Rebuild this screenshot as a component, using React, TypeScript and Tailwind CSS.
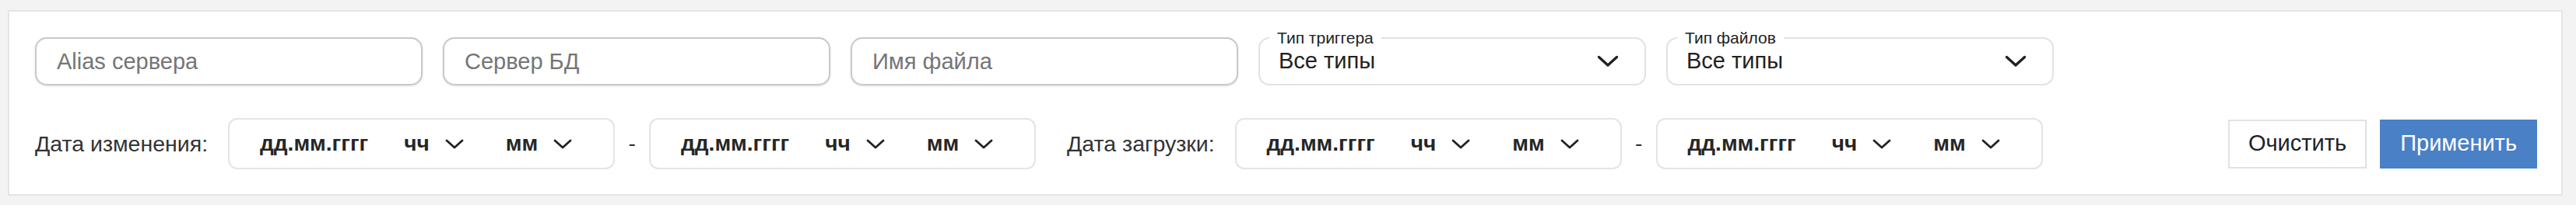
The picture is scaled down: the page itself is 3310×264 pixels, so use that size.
import React from "react";

function Chevron({ big = false }: { big?: boolean }) {
  if (big) {
    return (
      <svg width="28" height="16" viewBox="0 0 28 16" className="shrink-0 text-[#222]">
        <path d="M2.5 2.5 14 13 25.5 2.5" fill="none" stroke="currentColor" strokeWidth="3.4" strokeLinecap="round" strokeLinejoin="round" />
      </svg>
    );
  }
  return (
    <svg width="24" height="13" viewBox="0 0 24 13" className="shrink-0 text-[#222]">
      <path d="M2 2 12 11 22 2" fill="none" stroke="currentColor" strokeWidth="2.8" strokeLinecap="round" strokeLinejoin="round" />
    </svg>
  );
}

function TextInput({ placeholder }: { placeholder: string }) {
  return (
    <input
      type="text"
      placeholder={placeholder}
      className="w-[498px] h-[62px] shrink-0 rounded-[15px] border-2 border-[#c8c8c8] bg-white pl-[26px] pr-4 text-[29px] text-[#222] placeholder:text-[#757575] shadow-[0_1px_3px_rgba(0,0,0,0.12)] outline-none"
    />
  );
}

function TypeSelect({ label }: { label: string }) {
  return (
    <div className="relative w-[498px] h-[62px] shrink-0 rounded-[14px] border-2 border-[#e2e2e2] bg-white flex items-center pl-[24px] pr-[33px]">
      <span className="absolute -top-[12px] left-[12px] px-[10px] bg-white text-[21px] leading-[22px] text-[#222]">
        {label}
      </span>
      <span className="flex-1 text-[29px] text-[#222]">Все типы</span>
      <Chevron big />
    </div>
  );
}

function DateBox() {
  return (
    <div className="w-[497px] h-[66px] shrink-0 rounded-[12px] border-2 border-[#e4e4e4] bg-white flex items-center pl-[39px] text-[28px] font-bold text-[#262626]">
      <span>дд.мм.гггг</span>
      <span className="ml-[46px]">чч</span>
      <span className="ml-[20px]">
        <Chevron />
      </span>
      <span className="ml-[54px]">мм</span>
      <span className="ml-[20px]">
        <Chevron />
      </span>
    </div>
  );
}

function DateRange({ label, className = "" }: { label: string; className?: string }) {
  return (
    <div className={`flex items-center ${className}`}>
      <span className="mr-[26px] text-[28.5px] text-[#333] whitespace-nowrap">{label}</span>
      <DateBox />
      <span className="w-[44px] text-center text-[28px] text-[#333]">-</span>
      <DateBox />
    </div>
  );
}

export default function App() {
  return (
    <div className="w-[3310px] h-[264px] bg-[#f3f3f3] pt-[13px] pl-[10px] pr-[17px] font-['Liberation_Sans',Arial,sans-serif]">
      <div className="border-2 border-[#e5e5e5] bg-white pt-[33px] pb-[32px] pl-[33px] pr-[31px]">
        <div className="flex items-center gap-[26px]">
          <TextInput placeholder="Alias сервера" />
          <TextInput placeholder="Сервер БД" />
          <TextInput placeholder="Имя файла" />
          <TypeSelect label="Тип триггера" />
          <TypeSelect label="Тип файлов" />
        </div>

        <div className="mt-[42px] flex items-center">
          <DateRange label="Дата изменения:" />
          <DateRange label="Дата загрузки:" className="ml-[40px]" />
          <div className="ml-auto flex items-center gap-[17px]">
            <button className="h-[63px] px-[24px] border-2 border-[#e2e2e2] bg-white text-[29px] text-[#222]">
              Очистить
            </button>
            <button className="h-[63px] px-[24px] border-2 border-[#4a80c6] bg-[#4a80c6] text-[29px] text-white">
              Применить
            </button>
          </div>
        </div>
      </div>
    </div>
  );
}
